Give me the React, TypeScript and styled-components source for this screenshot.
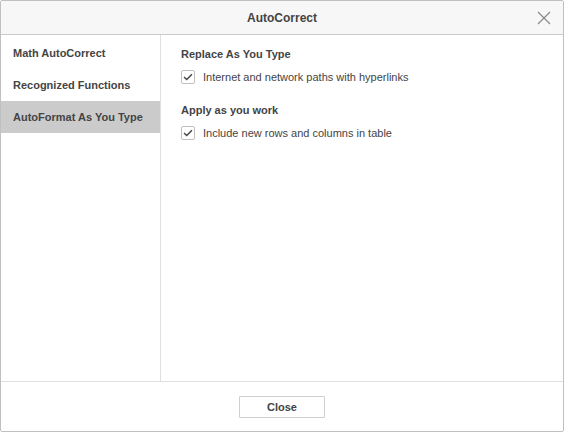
import React from "react";
import styled, { createGlobalStyle } from "styled-components";

const Global = createGlobalStyle`
  html, body { margin: 0; padding: 0; background: #fff; }
  body { font-family: Arial, "Liberation Sans", Helvetica, sans-serif; font-size: 11px; color: #444; }
  * { box-sizing: border-box; }
`;

const Dialog = styled.div`
  width: 564px;
  height: 432px;
  border: 1px solid #c0c0c0;
  border-radius: 2px;
  display: flex;
  flex-direction: column;
  background: #fff;
`;

const Header = styled.div`
  height: 34px;
  flex: none;
  background: #f7f7f7;
  border-bottom: 1px solid #cbcbcb;
  display: flex;
  align-items: center;
  justify-content: center;
  position: relative;
  font-weight: bold;
  font-size: 12px;
  color: #444;
`;

const CloseX = styled.button`
  position: absolute;
  right: 12px;
  top: 10px;
  width: 14px;
  height: 14px;
  padding: 0;
  border: none;
  background: none;
  display: flex;
`;

const Body = styled.div`
  flex: 1;
  display: flex;
  min-height: 0;
`;

const Sidebar = styled.div`
  width: 160px;
  flex: none;
  border-right: 1px solid #dfdfdf;
  padding-top: 2px;
  display: flex;
  flex-direction: column;
`;

const NavItem = styled.div<{ $active?: boolean }>`
  height: 32px;
  display: flex;
  align-items: center;
  padding-left: 12px;
  font-weight: bold;
  font-size: 11px;
  color: #444;
  background: ${(p) => (p.$active ? "#cbcbcb" : "transparent")};
`;

const Content = styled.div`
  flex: 1;
  padding: 12px 0 0 20px;
  display: flex;
  flex-direction: column;
`;

const SectionTitle = styled.div`
  font-weight: bold;
  font-size: 11px;
  color: #444;
  height: 14px;
  line-height: 14px;
  margin-bottom: 9px;
`;

const Row = styled.label`
  display: flex;
  align-items: center;
  gap: 8px;
  height: 14px;
  margin-bottom: 19px;
  font-size: 11px;
  color: #444;
`;

const Box = styled.span`
  width: 14px;
  height: 14px;
  border: 1px solid #c0c0c0;
  border-radius: 2px;
  background: #fff;
  display: flex;
  align-items: center;
  justify-content: center;
`;

const Footer = styled.div`
  height: 50px;
  flex: none;
  border-top: 1px solid #dfdfdf;
  display: flex;
  justify-content: center;
  padding-top: 14px;
`;

const Button = styled.button`
  width: 86px;
  height: 22px;
  border: 1px solid #cfcfcf;
  border-radius: 1px;
  background: #fff;
  font-family: Arial, "Liberation Sans", sans-serif;
  font-weight: bold;
  font-size: 11px;
  color: #444;
  padding: 0;
`;

const Check = () => (
  <svg width="10" height="8" viewBox="0 0 10 8">
    <path d="M1 4 L3.7 6.6 L9 1.2" fill="none" stroke="#444" strokeWidth="1.4" />
  </svg>
);

const Option = ({ text }: { text: string }) => (
  <Row>
    <Box>
      <Check />
    </Box>
    {text}
  </Row>
);

export default function App() {
  return (
    <>
      <Global />
      <Dialog>
        <Header>
          AutoCorrect
          <CloseX aria-label="close">
            <svg width="14" height="14" viewBox="0 0 14 14">
              <path d="M1 1 L13 13 M13 1 L1 13" stroke="#8a8a8a" strokeWidth="1.2" />
            </svg>
          </CloseX>
        </Header>
        <Body>
          <Sidebar>
            <NavItem>Math AutoCorrect</NavItem>
            <NavItem>Recognized Functions</NavItem>
            <NavItem $active>AutoFormat As You Type</NavItem>
          </Sidebar>
          <Content>
            <SectionTitle>Replace As You Type</SectionTitle>
            <Option text="Internet and network paths with hyperlinks" />
            <SectionTitle>Apply as you work</SectionTitle>
            <Option text="Include new rows and columns in table" />
          </Content>
        </Body>
        <Footer>
          <Button>Close</Button>
        </Footer>
      </Dialog>
    </>
  );
}
